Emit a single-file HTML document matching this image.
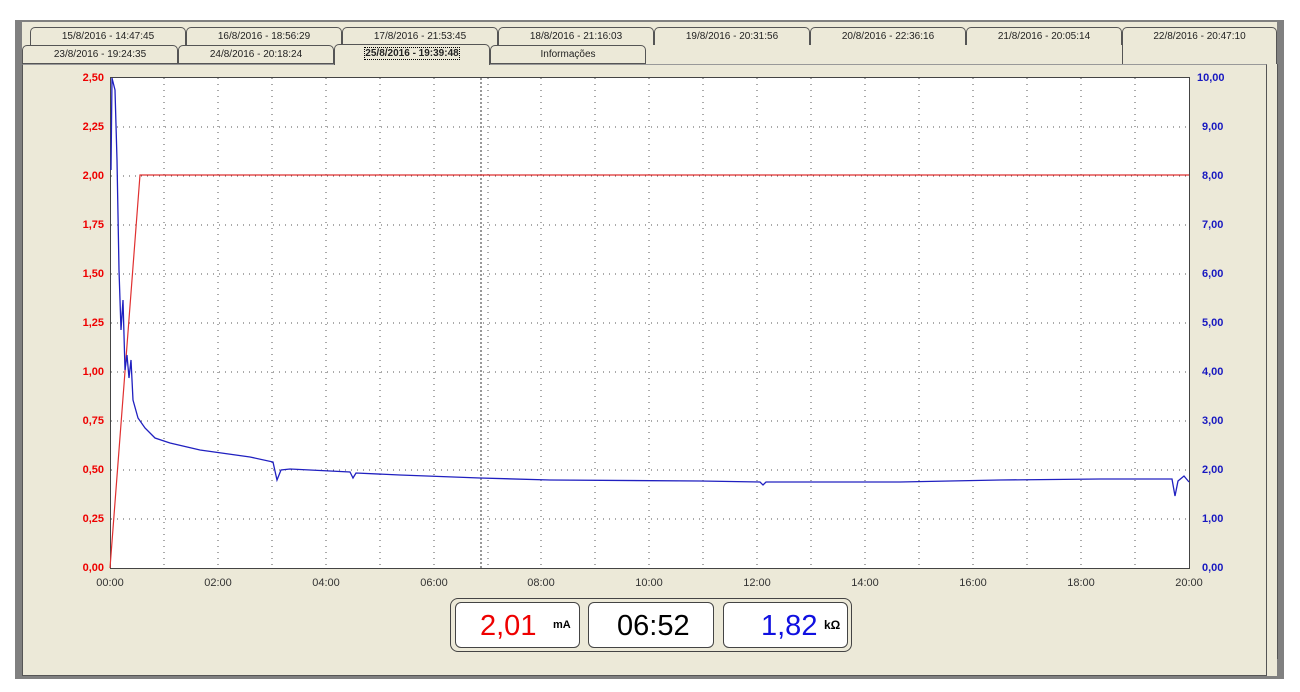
<!DOCTYPE html>
<html><head><style>
body{margin:0;width:1300px;height:692px;background:#fff;position:relative;overflow:hidden;font-family:"Liberation Sans",Arial,sans-serif}
.a{position:absolute}
.tab{position:absolute;height:18px;background:#ece9d8;border:1px solid #555;border-bottom:none;border-radius:5px 5px 0 0;font-size:10px;text-align:center;line-height:17px;color:#222;box-sizing:border-box}
.yl{position:absolute;font-size:11px;font-weight:bold;color:#e00;width:40px;text-align:right;left:64px}
.yr{position:absolute;font-size:11px;font-weight:bold;color:#1818c0;left:1197px}
.xl{position:absolute;font-size:11px;color:#333;width:50px;text-align:center;top:577px}
.box{position:absolute;top:602px;height:46px;background:#fff;border:1px solid #444;border-radius:6px;box-sizing:border-box}
</style></head><body>
<div class="a" style="left:15px;top:20px;width:1269px;height:659px;background:#808080"></div>
<div class="a" style="left:22px;top:22px;width:1255px;height:654px;background:#ece9d8"></div>
<div class="a" style="left:1267px;top:64px;width:10px;height:595px;background:#ece9d8;border-right:1px solid #555"></div>
<div class="a" style="left:22px;top:64px;width:1245px;height:612px;background:#ece9d8;border:1px solid #555;border-top:1px solid #999;box-sizing:border-box"></div>
<div class="tab" style="left:30px;top:27px;width:156px">15/8/2016 - 14:47:45</div>
<div class="tab" style="left:186px;top:27px;width:156px">16/8/2016 - 18:56:29</div>
<div class="tab" style="left:342px;top:27px;width:156px">17/8/2016 - 21:53:45</div>
<div class="tab" style="left:498px;top:27px;width:156px">18/8/2016 - 21:16:03</div>
<div class="tab" style="left:654px;top:27px;width:156px">19/8/2016 - 20:31:56</div>
<div class="tab" style="left:810px;top:27px;width:156px">20/8/2016 - 22:36:16</div>
<div class="tab" style="left:966px;top:27px;width:156px">21/8/2016 - 20:05:14</div>
<div class="tab" style="left:1122px;top:27px;width:155px;height:37px;border-right:1px solid #555">22/8/2016 - 20:47:10</div>
<div class="tab" style="left:22px;top:45px;width:156px;height:19px;border-bottom:1px solid #555">23/8/2016 - 19:24:35</div>
<div class="tab" style="left:178px;top:45px;width:156px;height:19px;border-bottom:1px solid #555">24/8/2016 - 20:18:24</div>
<div class="tab" style="left:334px;top:44px;width:156px;height:21px;font-weight:bold"><span style="border:1px dotted #000">25/8/2016 - 19:39:48</span></div>
<div class="tab" style="left:490px;top:45px;width:156px;height:19px;border-bottom:1px solid #555">Informações</div>
<svg class="a" style="left:0;top:0" width="1300" height="692">
<rect x="110.5" y="77.5" width="1079" height="491" fill="#fff" stroke="#444"/>
<g stroke="#555" stroke-dasharray="1,5" stroke-width="1">
<path d="M164 78V568M218 78V568M272 78V568M326 78V568M380 78V568M434 78V568M488 78V568M541 78V568M595 78V568M649 78V568M703 78V568M757 78V568M811 78V568M865 78V568M919 78V568M973 78V568M1027 78V568M1081 78V568M1135 78V568"/>
<path d="M111 127H1189M111 176H1189M111 225H1189M111 274H1189M111 323H1189M111 372H1189M111 421H1189M111 470H1189M111 519H1189"/>
</g>
<path d="M481 78V568" stroke="#333" stroke-dasharray="2,2"/>
<polyline fill="none" stroke="#e03030" stroke-width="1.2" points="110,568 140,175 1189,175"/>
<polyline fill="none" stroke="#2020c0" stroke-width="1.3" points="111,170 112,78 115,90 117,160 119,270 121,330 123,300 125,370 127,355 129,378 131,360 133,400 138,418 145,428 155,438 170,443 200,450 250,457 273,462 277,480 281,470 290,469 350,472 353,478 356,473 400,475 480,478 550,480 700,481 760,482 763,485 766,482 900,482 1000,480 1100,479 1172,479 1175,496 1178,481 1184,476 1189,482"/>
</svg>
<div class="yl" style="top:72px">2,50</div><div class="yl" style="top:121px">2,25</div><div class="yl" style="top:170px">2,00</div><div class="yl" style="top:219px">1,75</div><div class="yl" style="top:268px">1,50</div><div class="yl" style="top:317px">1,25</div><div class="yl" style="top:366px">1,00</div><div class="yl" style="top:415px">0,75</div><div class="yl" style="top:464px">0,50</div><div class="yl" style="top:513px">0,25</div><div class="yl" style="top:562px">0,00</div>
<div class="yr" style="top:72px">10,00</div><div class="yr" style="top:121px;left:1202px">9,00</div><div class="yr" style="top:170px;left:1202px">8,00</div><div class="yr" style="top:219px;left:1202px">7,00</div><div class="yr" style="top:268px;left:1202px">6,00</div><div class="yr" style="top:317px;left:1202px">5,00</div><div class="yr" style="top:366px;left:1202px">4,00</div><div class="yr" style="top:415px;left:1202px">3,00</div><div class="yr" style="top:464px;left:1202px">2,00</div><div class="yr" style="top:513px;left:1202px">1,00</div><div class="yr" style="top:562px;left:1202px">0,00</div>
<div class="xl" style="left:85px">00:00</div><div class="xl" style="left:193px">02:00</div><div class="xl" style="left:301px">04:00</div><div class="xl" style="left:409px">06:00</div><div class="xl" style="left:516px">08:00</div><div class="xl" style="left:624px">10:00</div><div class="xl" style="left:732px">12:00</div><div class="xl" style="left:840px">14:00</div><div class="xl" style="left:948px">16:00</div><div class="xl" style="left:1056px">18:00</div><div class="xl" style="left:1164px">20:00</div>
<div class="a" style="left:450px;top:598px;width:402px;height:54px;border:1px solid #444;border-radius:8px;box-sizing:border-box"></div>
<div class="box" style="left:455px;width:125px"><span class="a" style="left:24px;top:7px;font-size:29px;color:#e00">2,01</span><span class="a" style="left:97px;top:16px;font-size:11px;font-weight:bold">mA</span></div>
<div class="box" style="left:588px;width:126px"><span class="a" style="left:28px;top:7px;font-size:29px;color:#000">06:52</span></div>
<div class="box" style="left:723px;width:125px"><span class="a" style="left:37px;top:7px;font-size:29px;color:#1010e0">1,82</span><span class="a" style="left:100px;top:15px;font-size:12px;font-weight:bold">kΩ</span></div>
</body></html>
